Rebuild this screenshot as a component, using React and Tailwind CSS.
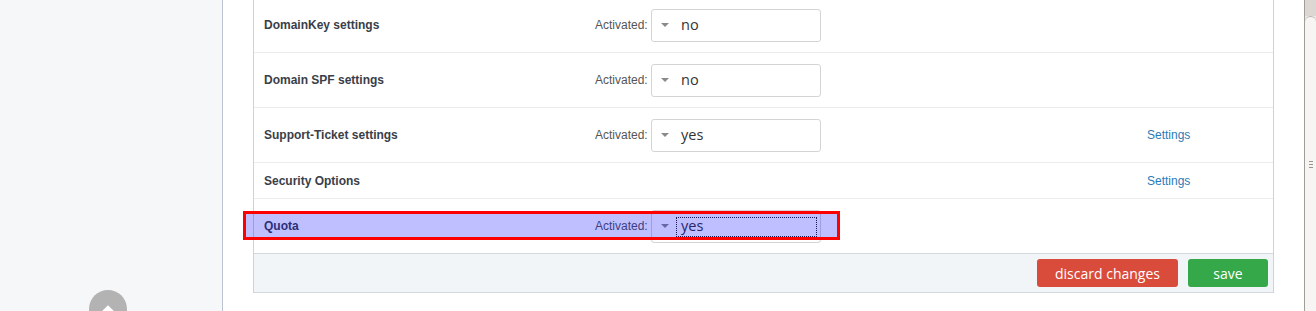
import React from "react";

const rows = [
  { label: "DomainKey settings", value: "no", h: "h-[55px]" },
  { label: "Domain SPF settings", value: "no", h: "h-[55px]" },
  { label: "Support-Ticket settings", value: "yes", h: "h-[55px]", settings: true },
  { label: "Security Options", h: "h-[36px]", settings: true },
  { label: "Quota", value: "yes", h: "h-[55px]", focused: true },
];

function Select({ value, focused }) {
  return (
    <div className="relative flex h-[33px] w-[170px] items-center rounded-[3px] border border-[#d4d4d4] bg-white">
      <span className="ml-[9px] h-0 w-0 border-x-[4px] border-t-[4px] border-x-transparent border-t-[#8a8a8a]" />
      <span className="ml-[12px] font-['Open_Sans',sans-serif] text-[14.5px] text-[#333]">{value}</span>
      {focused && (
        <span className="absolute left-[24px] top-[6px] h-[20px] w-[141px] border border-dotted border-[#222]" />
      )}
    </div>
  );
}

export default function App() {
  return (
    <div className="flex h-[311px] w-[1316px] overflow-hidden bg-white font-['Liberation_Sans',Arial,sans-serif]">
      {/* sidebar */}
      <div className="relative w-[223px] shrink-0 border-r border-[#bcc4d2] bg-[#f5f7f9]">
        <button className="absolute left-[89px] top-[290px] flex h-[38px] w-[38px] justify-center rounded-full bg-[#b3b3b3]">
          <svg width="18" height="12" viewBox="0 0 18 12" className="mt-[14px]">
            <path d="M2 11 L9 4 L16 11" stroke="#fff" strokeWidth="4" fill="none" />
          </svg>
        </button>
      </div>

      {/* main */}
      <div className="flex-1 pl-[30px] pr-[30px]">
        <div className="relative -mt-[2px] border-x border-[#d2d2d2]">
          {rows.map((r) => (
            <div key={r.label} className={`flex items-center border-b border-[#ececec] pl-[10px] ${r.h}`}>
              <div className="w-[331px] text-[12px] font-bold text-[#3a3e48]">{r.label}</div>
              <div className="flex w-[552px] items-center">
                {r.value && (
                  <>
                    <span className="w-[53px] text-[12px] text-[#555]">Activated:</span>
                    <span className="ml-[3px]">
                      <Select value={r.value} focused={r.focused} />
                    </span>
                  </>
                )}
              </div>
              {r.settings && <a className="text-[12px] text-[#2a7bb9]">Settings</a>}
            </div>
          ))}
          <div className="-mt-px flex h-[40px] items-center justify-end gap-[10px] border-y border-[#d3d8de] bg-[#f1f5f8] pr-[5px]">
            <button className="h-[28px] w-[141px] rounded-[3px] bg-[#d94b3b] font-['Open_Sans',sans-serif] text-[14px] text-white">
              discard changes
            </button>
            <button className="h-[28px] w-[80px] rounded-[3px] bg-[#35a84a] font-['Open_Sans',sans-serif] text-[14px] text-white">
              save
            </button>
          </div>

          {/* inspector highlight over Quota row */}
          <div className="absolute left-[-11px] top-[213px] h-[29px] w-[597px] border-[3px] border-[#ff0000] bg-[rgba(0,0,255,0.25)]" />
        </div>
      </div>

      {/* scrollbar */}
      <div className="flex w-[12px] shrink-0 flex-col border-l border-[#a39d98] bg-[#ece9e6]">
        <div className="h-[16px] bg-[#dcd7d2]" />
        <div className="flex flex-1 flex-col items-center justify-center gap-[2px] rounded-t-[6px] border-t border-[#b8b2ad] bg-[#f6f5f4]">
          <span className="h-px w-[4px] bg-[#9a948f]" />
          <span className="h-px w-[4px] bg-[#9a948f]" />
          <span className="h-px w-[4px] bg-[#9a948f]" />
        </div>
      </div>
    </div>
  );
}
